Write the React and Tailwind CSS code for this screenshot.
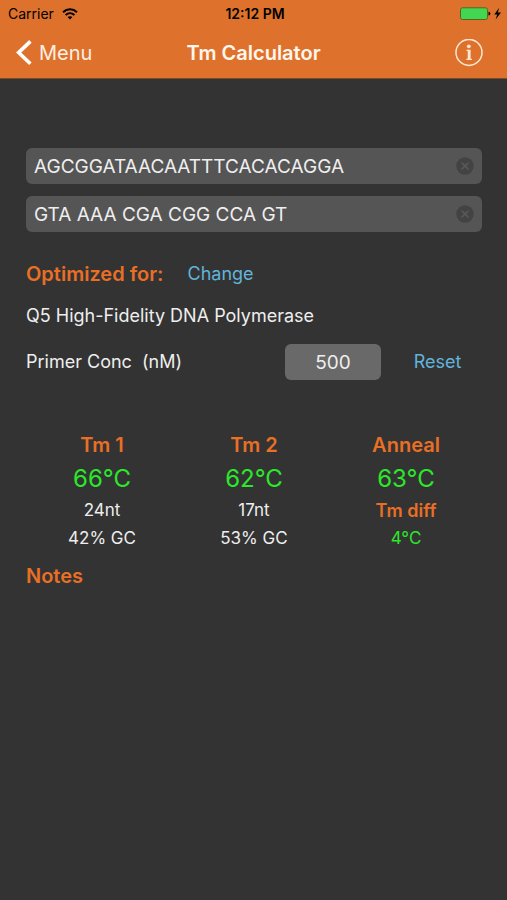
import { useState } from "react";

function StatusBar() {
  return (
    <div className="grid h-7 grid-cols-3 items-center pr-[5px] pl-2 text-black">
      <div className="flex items-center gap-2 text-sm">
        <span>Carrier</span>
        <svg viewBox="0 0 16 12" className="h-3 w-4" fill="none" stroke="currentColor" strokeWidth="2" aria-label="Wi-Fi">
          <path d="M1 4.2C5 0.4 11 0.4 15 4.2" />
          <path d="M3.6 7C6.2 4.6 9.8 4.6 12.4 7" />
          <path d="M8 11.6L5.6 9.1C7 7.9 9 7.9 10.4 9.1Z" fill="currentColor" stroke="none" />
        </svg>
      </div>
      <div className="text-center text-sm font-semibold whitespace-nowrap">12:12 PM</div>
      <div className="flex items-center justify-end">
        <svg viewBox="0 0 42 14" className="h-3.5 w-[42px]" aria-label="Battery charging">
          <rect x="0.5" y="0.8" width="27" height="11.7" rx="2" fill="#43d651" stroke="#59651f" />
          <path d="M28.5 4.8C31 5.2 31 8.2 28.5 8.6Z" fill="#000" />
          <path d="M39.2 0.8L34.2 7.4H37.2L35.6 12.4L41 5.6H37.8Z" fill="#000" />
        </svg>
      </div>
    </div>
  );
}

function NavBar() {
  return (
    <div className="grid h-[50px] grid-cols-[1fr_auto_1fr] items-center px-4 text-white">
      <button type="button" className="flex items-center gap-[7px] justify-self-start text-xl text-[#fff0e4]">
        <svg viewBox="0 0 16 26" className="h-[26px] w-4" fill="none" stroke="#fff" strokeWidth="3.6" aria-hidden="true">
          <path d="M14.4 1.4L2.6 12.6L14.4 23.8" />
        </svg>
        Menu
      </button>
      <h1 className="text-xl font-semibold text-[#fff6ee]">Tm Calculator</h1>
      <button type="button" aria-label="Information" className="mr-2 justify-self-end">
        <svg viewBox="0 0 28 28" className="size-7" aria-hidden="true">
          <circle cx="14" cy="13.4" r="13" fill="none" stroke="#ffe6d2" strokeWidth="1.5" />
          <circle cx="13.8" cy="7.3" r="1.9" fill="#ffe6d2" />
          <path d="M11.5 10.7H15.6V19.8H17V21.1H11.3V19.8H12.7V12H11.5Z" fill="#ffe6d2" />
        </svg>
      </button>
    </div>
  );
}

function PrimerField({ label, value, onChange }) {
  return (
    <div className="flex h-9 items-center rounded-md bg-[#555] px-2">
      <input
        type="text"
        aria-label={label}
        value={value}
        onChange={(e) => onChange(e.target.value)}
        className="h-full min-w-0 flex-1 bg-transparent text-[19px] text-[#eee] outline-none"
      />
      <button type="button" aria-label={"Clear " + label} onClick={() => onChange("")}>
        <svg viewBox="0 0 18 18" className="size-[18px]" aria-hidden="true">
          <circle cx="9" cy="9" r="8.7" fill="#434343" />
          <path d="M5.6 5.6L12.4 12.4M12.4 5.6L5.6 12.4" stroke="#585858" strokeWidth="1.5" />
        </svg>
      </button>
    </div>
  );
}

export default function App() {
  const [primer1, setPrimer1] = useState("AGCGGATAACAATTTCACACAGGA");
  const [primer2, setPrimer2] = useState("GTA AAA CGA CGG CCA GT");
  const [conc, setConc] = useState("500");

  return (
    <div className="min-h-screen bg-[#333] font-['Inter','Liberation_Sans',sans-serif] text-[#eee]">
      <header className="border-b border-[#7a4b2a] bg-[#de722c]">
        <StatusBar />
        <NavBar />
      </header>

      <main className="pt-[69px] pr-[25px] pl-[26px]">
        <div className="flex flex-col gap-3">
          <PrimerField label="Primer 1" value={primer1} onChange={setPrimer1} />
          <PrimerField label="Primer 2" value={primer2} onChange={setPrimer2} />
        </div>

        <div className="mt-6 flex h-9 items-center gap-6">
          <h2 className="text-xl font-semibold text-[#e86f25]">Optimized for:</h2>
          <button type="button" className="text-lg text-[#62b4dc]">Change</button>
        </div>

        <p className="mt-2 text-lg leading-8">Q5 High-Fidelity DNA Polymerase</p>

        <div className="mt-3 flex h-9 items-center">
          <label htmlFor="conc" className="flex-1 text-lg whitespace-pre">Primer Conc  (nM)</label>
          <input
            id="conc"
            type="text"
            inputMode="numeric"
            value={conc}
            onChange={(e) => setConc(e.target.value)}
            className="h-9 w-24 rounded-md bg-[#696969] text-center text-[19px] text-[#eee] outline-none"
          />
          <button type="button" onClick={() => setConc("500")} className="w-[101px] pl-3 text-center text-lg text-[#62b4dc]">
            Reset
          </button>
        </div>

        <table className="mt-[49px] w-full table-fixed text-center text-[17px]">
          <thead>
            <tr className="h-8 text-xl text-[#e86f25]">
              <th scope="col" className="p-0 font-semibold">Tm 1</th>
              <th scope="col" className="p-0 font-semibold">Tm 2</th>
              <th scope="col" className="p-0 font-semibold">Anneal</th>
            </tr>
          </thead>
          <tbody>
            <tr className="h-9 text-2xl text-[#2be82b]">
              <td className="p-0">66°C</td>
              <td className="p-0">62°C</td>
              <td className="p-0">63°C</td>
            </tr>
            <tr className="h-7">
              <td className="p-0">24nt</td>
              <td className="p-0">17nt</td>
              <th scope="row" className="p-0 text-lg leading-7 font-semibold text-[#e86f25]">Tm diff</th>
            </tr>
            <tr className="h-7">
              <td className="p-0">42% GC</td>
              <td className="p-0">53% GC</td>
              <td className="p-0 text-[#2be82b]">4°C</td>
            </tr>
          </tbody>
        </table>

        <h2 className="mt-2 text-xl leading-[30px] font-semibold text-[#e86f25]">Notes</h2>
      </main>
    </div>
  );
}
